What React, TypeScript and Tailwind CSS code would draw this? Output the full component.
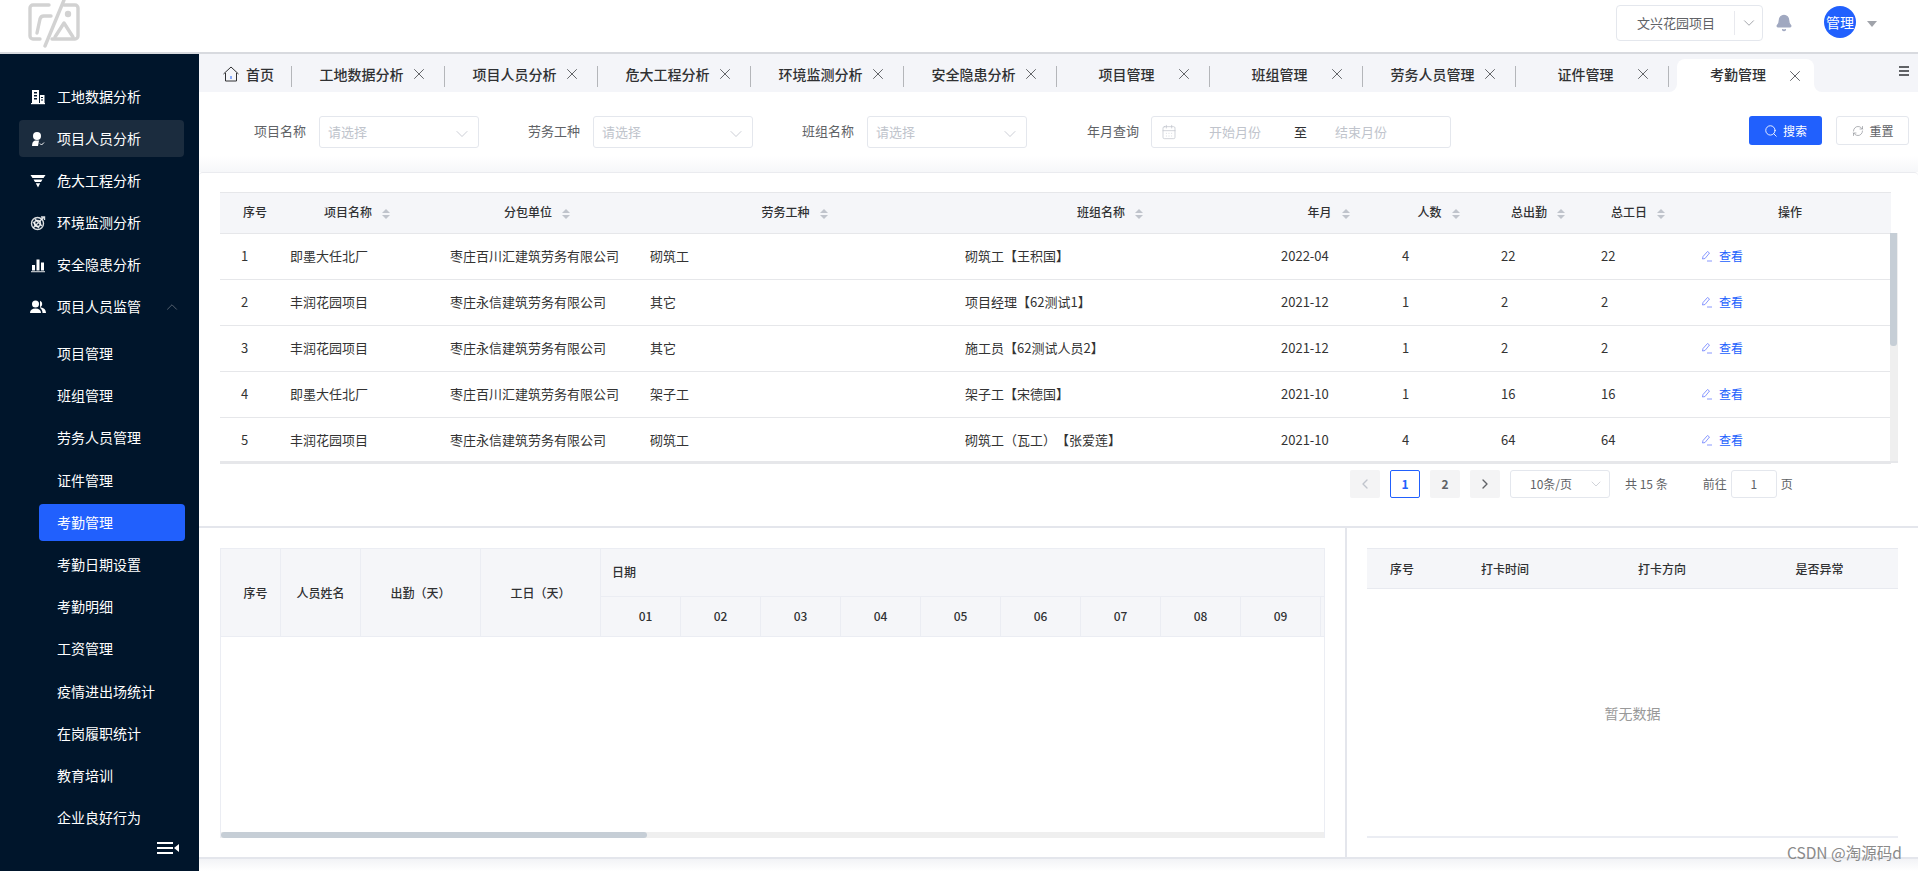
import { Bell, CalendarDays, ChevronDown, ChevronLeft, ChevronRight, ChevronUp, Search, RefreshCw, X } from 'lucide-react'

const font = { fontFamily: '"Noto Sans CJK SC", sans-serif' }

const tabs = ['工地数据分析', '项目人员分析', '危大工程分析', '环境监测分析', '安全隐患分析', '项目管理', '班组管理', '劳务人员管理', '证件管理']

const subMenu = ['项目管理', '班组管理', '劳务人员管理', '证件管理', '考勤管理', '考勤日期设置', '考勤明细', '工资管理', '疫情进出场统计', '在岗履职统计', '教育培训', '企业良好行为']

const rows = [
  ['1', '即墨大任北厂', '枣庄百川汇建筑劳务有限公司', '砌筑工', '砌筑工【王积国】', '2022-04', '4', '22', '22'],
  ['2', '丰润花园项目', '枣庄永信建筑劳务有限公司', '其它', '项目经理【62测试1】', '2021-12', '1', '2', '2'],
  ['3', '丰润花园项目', '枣庄永信建筑劳务有限公司', '其它', '施工员【62测试人员2】', '2021-12', '1', '2', '2'],
  ['4', '即墨大任北厂', '枣庄百川汇建筑劳务有限公司', '架子工', '架子工【宋德国】', '2021-10', '1', '16', '16'],
  ['5', '丰润花园项目', '枣庄永信建筑劳务有限公司', '砌筑工', '砌筑工（瓦工）【张爱莲】', '2021-10', '4', '64', '64'],
]

const columns = [
  { title: '序号', width: 'w-[58px]', sort: false },
  { title: '项目名称', width: 'w-[160px]', sort: true },
  { title: '分包单位', width: 'w-[200px]', sort: true },
  { title: '劳务工种', width: 'w-[315px]', sort: true },
  { title: '班组名称', width: 'w-[316px]', sort: true },
  { title: '年月', width: 'w-[121px]', sort: true },
  { title: '人数', width: 'w-[99px]', sort: true },
  { title: '总出勤', width: 'w-[100px]', sort: true },
  { title: '总工日', width: 'w-[100px]', sort: true },
  { title: '操作', width: 'w-[202px]', sort: false },
]

const days = ['01', '02', '03', '04', '05', '06', '07', '08', '09']

function Logo() {
  return (
    <svg width="52" height="48" viewBox="0 0 52 48" fill="none" stroke="#d2d2d2" strokeWidth="3.4" strokeLinecap="round" strokeLinejoin="round">
      <path d="M21 5H5a3 3 0 0 0-3 3v28a3 3 0 0 0 3 3h7" />
      <path d="M36 5h11a3 3 0 0 1 3 3v28a3 3 0 0 1-3 3H24" />
      <path d="M36 0 17 46" />
      <path d="M9 33l3-14a4 4 0 0 1 4-3h7" />
      <path d="M27 37l9-14 9 14" />
      <circle cx="40" cy="14" r="3.2" fill="#d2d2d2" stroke="none" />
    </svg>
  )
}

function MenuIcon({ type }: { type: string }) {
  if (type === 'building')
    return (
      <svg width="16" height="16" viewBox="0 0 16 16" fill="#fff">
        <path d="M2 1h7v13H2zM4 3v1.500h3V3zm0 3v1.500h3V6zm0 3v1.500h3V9zM10 6h4.500v8H10zm1 2v1h2V8zm0 2.500v1h2v-1z" fillRule="evenodd" />
        <rect x="1" y="14" width="14" height="1.2" />
      </svg>
    )
  if (type === 'user')
    return (
      <svg width="16" height="16" viewBox="0 0 16 16" fill="#fff">
        <circle cx="7" cy="5" r="4" />
        <path d="M2 15c0-3 1-5 3-5.500h4L8 15z" />
        <path d="M10 12.500l1.500 1.500L14 11.500" fill="none" stroke="#fff" strokeWidth="1" />
      </svg>
    )
  if (type === 'funnel')
    return (
      <svg width="16" height="16" viewBox="0 0 16 16" fill="#fff">
        <path d="M0.500 2h15l-2 3h-11zM3.500 6.500h9l-1.500 2.500H5zM5.800 10.300h4.400L8 14.500z" />
      </svg>
    )
  if (type === 'target')
    return (
      <svg width="16" height="16" viewBox="0 0 16 16" fill="none" stroke="#fff" strokeWidth="1.4">
        <circle cx="7.500" cy="8.500" r="6" opacity="0.85" />
        <circle cx="7.500" cy="8.500" r="3" opacity="0.85" />
        <path d="M3 13 14 2M11 2h3.500v3M3 7l6 6M5 4l7 7" opacity="0.85" />
      </svg>
    )
  if (type === 'chart')
    return (
      <svg width="16" height="16" viewBox="0 0 16 16" fill="#fff">
        <rect x="2" y="8" width="3" height="5.500" />
        <rect x="6.500" y="2.500" width="3" height="11" />
        <rect x="11" y="5.500" width="3" height="8" />
        <rect x="1" y="14.300" width="14" height="0.9" />
      </svg>
    )
  return (
    <svg width="16" height="16" viewBox="0 0 16 16" fill="#fff">
      <circle cx="5.500" cy="5" r="3.500" />
      <path d="M0 14c0-3 2-4.500 5.500-4.500S11 11 11 14z" />
      <path d="M10 1.800a3.400 3.400 0 0 1 0 6.400c3 .5 6 1.800 6 5.800h-3.500c0-2.500-1-4-2.500-5" />
    </svg>
  )
}

function SortIcon() {
  return (
    <span className="ml-[10px] inline-flex flex-col gap-[2px] align-middle">
      <span className="h-0 w-0 border-x-[4px] border-b-[4px] border-x-transparent border-b-[#c0c4cc]" />
      <span className="h-0 w-0 border-x-[4px] border-t-[4px] border-x-transparent border-t-[#c0c4cc]" />
    </span>
  )
}

function Field({ label, className }: { label: string; className: string }) {
  return (
    <div className={`flex items-center ${className}`}>
      <span className="w-[52px] pb-[3px] text-[13px] text-[#606266]">{label}</span>
      <div className="ml-[13px] flex h-[32px] w-[160px] items-center justify-between rounded-[3px] border border-[#e4e7ed] pl-[8px] pr-[6px]">
        <span className="text-[13px] text-[#c0c4cc]">请选择</span>
        <ChevronDown size={20} strokeWidth={1} className="mt-[3px] text-[#c0c4cc]" />
      </div>
    </div>
  )
}

function Tab({ title }: { title: string }) {
  return (
    <div className="relative flex h-[38px] w-[153px] shrink-0 items-center pl-[21px] pt-[2px]">
      <span className="flex-1 text-center text-[14px] font-medium text-[#303133]">{title}</span>
      <X size={18} strokeWidth={1.3} className="mr-[17px] text-[#606266]" />
      <span className="absolute right-0 top-[12px] h-[21px] w-px bg-[#b4b6ba]" />
    </div>
  )
}

export default function App() {
  return (
    <div className="relative flex h-[871px] w-[1918px] flex-col overflow-hidden bg-white [text-spacing-trim:space-all]" style={font}>
      {/* top bar */}
      <header className="flex h-[54px] shrink-0 items-start border-b-2 border-[#d8dadf] bg-white">
        <div className="ml-[28px] h-[48px] w-[52px]">
          <Logo />
        </div>
        <div className="ml-auto mt-[5px] flex h-[36px] w-[147px] items-center rounded-[4px] border border-[#e4e7ed]">
          <span className="ml-[20px] w-[97px] text-[13px] text-[#606266]">文兴花园项目</span>
          <span className="h-[24px] w-px bg-[#e8e9ee]" />
          <ChevronDown size={18} strokeWidth={1.1} className="ml-[5px] text-[#909399]" />
        </div>
        <Bell size={18} fill="#a0a8c0" stroke="#a0a8c0" className="ml-[12px] mt-[14px]" />
        <div className="ml-[31px] mt-[6px] flex h-[32px] w-[32px] items-center justify-center rounded-full bg-[#2160fd] text-[14px] whitespace-nowrap text-white">管理</div>
        <span className="ml-[11px] mt-[21px] h-0 w-0 border-x-[5px] border-t-[6px] border-x-transparent border-t-[#a0a3aa]" />
        <span className="w-[41px]" />
      </header>

      <div className="flex min-h-0 flex-1">
        {/* sidebar */}
        <aside className="flex w-[199px] shrink-0 flex-col bg-[#00152b] pt-[24px] text-[14px] text-white">
          <div className="flex flex-col gap-[5px] pl-[19px] pr-[15px]">
            {[
              ['building', '工地数据分析'],
              ['user', '项目人员分析'],
              ['funnel', '危大工程分析'],
              ['target', '环境监测分析'],
              ['chart', '安全隐患分析'],
              ['group', '项目人员监管'],
            ].map(([icon, label], i) => (
              <div key={label} className={`flex h-[37px] items-center rounded-[4px] pl-[11px] ${i === 1 ? 'bg-[#1b2c3e]' : ''}`}>
                <MenuIcon type={icon} />
                <span className="ml-[11px]">{label}</span>
                {i === 5 && <ChevronUp size={18} strokeWidth={1.2} className="ml-[22px] text-[#5c6875]" />}
              </div>
            ))}
          </div>
          <div className="mt-[10px] flex flex-col gap-[5px] pl-[39px] pr-[14px]">
            {subMenu.map((item) => (
              <div key={item} className={`flex h-[37.2px] items-center rounded-[4px] pl-[18px] ${item === '考勤管理' ? 'bg-[#2160fd]' : ''}`}>
                {item}
              </div>
            ))}
          </div>
          <div className="mr-[20px] mt-[6px] flex items-center justify-end gap-[1px]">
            <span className="flex w-[16px] flex-col gap-[3px]">
              <span className="h-[2px] bg-white" />
              <span className="h-[2px] bg-white" />
              <span className="h-[2px] bg-white" />
            </span>
            <span className="h-0 w-0 border-y-[4px] border-r-[5px] border-y-transparent border-r-white" />
          </div>
        </aside>

        <main className="flex min-w-0 flex-1 flex-col bg-white">
          {/* tabs */}
          <div className="flex h-[38px] shrink-0 bg-[#f4f5f9]">
            <div className="relative flex h-[38px] w-[93px] shrink-0 items-center pl-[23px] pt-[2px]">
              <svg width="18" height="18" viewBox="0 0 18 18" fill="none" stroke="#303133" strokeWidth="1">
                <path d="M1.5 9 9 2l7.500 7M3.500 8v8h11V8" />
                <path d="M9 11v3" stroke="#2160fd" />
              </svg>
              <span className="ml-[6px] text-[14px] font-medium text-[#303133]">首页</span>
              <span className="absolute right-0 top-[12px] h-[21px] w-px bg-[#b4b6ba]" />
            </div>
            {tabs.map((t) => (
              <Tab key={t} title={t} />
            ))}
            <div className="relative ml-[8px] mt-[5px] flex h-[33px] w-[137px] shrink-0 items-center rounded-t-[8px] bg-white pl-[13px]">
              <span className="absolute -left-[8px] bottom-0 h-[8px] w-[8px] bg-white">
                <span className="block h-full w-full rounded-br-[8px] bg-[#f4f5f9]" />
              </span>
              <span className="flex-1 pb-[2px] text-center text-[14px] font-medium text-[#303133]">考勤管理</span>
              <X size={18} strokeWidth={1.3} className="mr-[10px] text-[#606266]" />
              <span className="absolute -right-[8px] bottom-0 h-[8px] w-[8px] bg-white">
                <span className="block h-full w-full rounded-bl-[8px] bg-[#f4f5f9]" />
              </span>
            </div>
            <div className="ml-[85px] mt-[12px] flex h-[10px] w-[10px] flex-col justify-between">
              <span className="h-[2px] bg-[#606266]" />
              <span className="h-[2px] bg-[#606266]" />
              <span className="h-[2px] bg-[#606266]" />
            </div>
          </div>

          {/* filter row */}
          <div className="flex h-[80px] shrink-0 items-start bg-gradient-to-b from-white from-80% to-[#f6f7f9] pl-[55px] pt-[24px]">
            <Field label="项目名称" className="" />
            <Field label="劳务工种" className="ml-[49px]" />
            <Field label="班组名称" className="ml-[49px]" />
            <div className="ml-[60px] flex items-center">
              <span className="pb-[3px] text-[13px] text-[#606266]">年月查询</span>
              <div className="ml-[12px] flex h-[32px] w-[300px] items-center rounded-[3px] border border-[#e4e7ed] pl-[9px] text-[13px] text-[#c0c4cc]">
                <CalendarDays size={16} strokeWidth={1.1} />
                <span className="ml-[32px]">开始月份</span>
                <span className="ml-[33px] text-[#303133]">至</span>
                <span className="ml-[28px]">结束月份</span>
              </div>
            </div>
            <button className="ml-[298px] flex h-[29px] w-[73px] items-center justify-center rounded-[3px] bg-[#2160fd] text-[12px] text-white">
              <Search size={14} strokeWidth={1.5} className="mr-[5px]" />
              搜索
            </button>
            <button className="ml-[14px] flex h-[29px] w-[73px] items-center justify-center rounded-[3px] border border-[#e4e7ed] text-[12px] text-[#606266]">
              <RefreshCw size={12} strokeWidth={1.4} className="mr-[6px] text-[#909399]" />
              重置
            </button>
          </div>

          {/* attendance list */}
          <section className="h-[354px] shrink-0 rounded-t-[4px] border-t border-[#eaebef] bg-white pl-[21px] pr-[20px] pt-[19px]">
            <div className="relative h-[271px] border-b-2 border-[#e6e7ea]">
              <table className="w-[1671px] table-fixed border-collapse text-[13px] text-[#333]">
                <colgroup>
                  {columns.map((c) => (
                    <col key={c.title} className={c.width} />
                  ))}
                </colgroup>
                <thead>
                  <tr className="h-[41px] border-y border-[#e6e7ea] bg-[#f5f6f9]">
                    {columns.map((c, i) => (
                      <th key={c.title} className={`pb-[2px] text-center text-[12px] font-medium text-[#303133] ${i === 0 ? 'pl-[12px]' : c.sort ? 'pr-[2px]' : ''}`}>
                        {c.title}
                        {c.sort && <SortIcon />}
                      </th>
                    ))}
                  </tr>
                </thead>
                <tbody>
                  {rows.map((row) => (
                    <tr key={row[0]} className="h-[46px] border-b border-[#e6e7ea]">
                      {row.map((cell, i) => (
                        <td key={i} className={`truncate pb-[2px] ${i === 0 ? 'pl-[21px]' : 'pl-[12px]'}`}>
                          {cell}
                        </td>
                      ))}
                      <td className="pb-[2px] pl-[12px]">
                        <span className="flex items-center text-[12px] text-[#2160fd]">
                          <svg width="12" height="12" viewBox="0 0 12 12" fill="none" stroke="#7a8cff" strokeWidth="0.9">
                            <path d="M1.500 9 2 6.500 6.500 1.500 8.500 3 4 8.500zM6 11h5" />
                          </svg>
                          <span className="ml-[6px]">查看</span>
                        </span>
                      </td>
                    </tr>
                  ))}
                </tbody>
              </table>
              <div className="absolute right-0 top-[41px] h-[228px] w-[8px] bg-[#efefef]">
                <div className="h-[113px] w-[7px] rounded-b-[3px] bg-[#c6ced6]" />
              </div>
            </div>
            {/* pagination */}
            <div className="mt-[7px] flex h-[28px] items-center pl-[1130px] text-[12px] text-[#606266]">
              <span className="flex h-[28px] w-[30px] items-center justify-center rounded-[2px] bg-[#f4f4f5] text-[#c0c4cc]">
                <ChevronLeft size={16} />
              </span>
              <span className="ml-[10px] flex h-[28px] w-[30px] items-center justify-center rounded-[2px] border border-[#2160fd] font-bold text-[#2160fd]">1</span>
              <span className="ml-[10px] flex h-[28px] w-[30px] items-center justify-center rounded-[2px] bg-[#f4f4f5] font-bold">2</span>
              <span className="ml-[10px] flex h-[28px] w-[30px] items-center justify-center rounded-[2px] bg-[#f4f4f5]">
                <ChevronRight size={16} />
              </span>
              <span className="ml-[10px] flex h-[28px] w-[100px] items-center justify-between rounded-[3px] border border-[#e4e7ed] pl-[19px] pr-[5px]">
                10条/页
                <ChevronDown size={16} strokeWidth={1.1} className="text-[#c0c4cc]" />
              </span>
              <span className="ml-[15px]">共 15 条</span>
              <span className="ml-[35px]">前往</span>
              <span className="ml-[4px] flex h-[28px] w-[46px] items-center justify-center rounded-[3px] border border-[#e4e7ed]">1</span>
              <span className="ml-[4px]">页</span>
            </div>
          </section>

          {/* bottom panels */}
          <div className="flex h-[333px] shrink-0 border-y-2 border-[#e4e6ec]">
            <section className="w-[1146px] shrink-0 pl-[21px] pt-[20px]">
              <div className="flex h-[290px] w-[1105px] flex-col overflow-hidden border-x border-t border-[#ebedf3] text-[12px] font-medium text-[#303133]">
                <div className="flex h-[88px] shrink-0 border-b border-[#ebedf3] bg-[#f5f6f9]">
                  <div className="flex w-[60px] shrink-0 items-center justify-center border-r border-[#ebedf3] pl-[10px]">序号</div>
                  <div className="flex w-[80px] shrink-0 items-center justify-center border-r border-[#ebedf3]">人员姓名</div>
                  <div className="flex w-[120px] shrink-0 items-center justify-center border-r border-[#ebedf3]">出勤（天）</div>
                  <div className="flex w-[120px] shrink-0 items-center justify-center border-r border-[#ebedf3]">工日（天）</div>
                  <div className="flex w-[725px] shrink-0 flex-col">
                    <div className="flex h-[48px] items-center border-b border-[#ebedf3] pb-[2px] pl-[11px]">日期</div>
                    <div className="flex flex-1">
                      {days.map((d, i) => (
                        <div key={d} className={`flex w-[80px] shrink-0 items-center justify-center border-r border-[#ebedf3] pb-[2px] ${i === 0 ? 'pl-[10px]' : ''}`}>
                          {d}
                        </div>
                      ))}
                    </div>
                  </div>
                </div>
                <div className="flex-1" />
                <div className="h-[6px] shrink-0 bg-[#efefef]">
                  <div className="h-full w-[426px] rounded-[3px] bg-[#c6ced6]" />
                </div>
              </div>
            </section>
            <section className="flex flex-1 flex-col border-l-2 border-[#e4e6ec] pl-[20px] pr-[20px] pt-[20px]">
              <div className="flex h-[41px] shrink-0 items-center border-y border-[#e8eaf0] bg-[#f5f6f9] text-[12px] font-medium text-[#303133]">
                <span className="w-[70px] text-center">序号</span>
                <span className="w-[136px] text-center">打卡时间</span>
                <span className="w-[178px] text-center">打卡方向</span>
                <span className="w-[137px] text-center">是否异常</span>
              </div>
              <div className="flex h-[249px] shrink-0 items-center justify-center border-b-2 border-[#ebedf3] pt-[2px] text-[14px] text-[#999]">暂无数据</div>
            </section>
          </div>
          <div className="flex-1 bg-gradient-to-b from-[#f2f3f6] to-white" />
        </main>
      </div>

      {/* watermark */}
      <span className="absolute left-[1787px] top-[841px] text-[15.5px] text-[#8a8a8a]">CSDN @淘源码d</span>
    </div>
  )
}
